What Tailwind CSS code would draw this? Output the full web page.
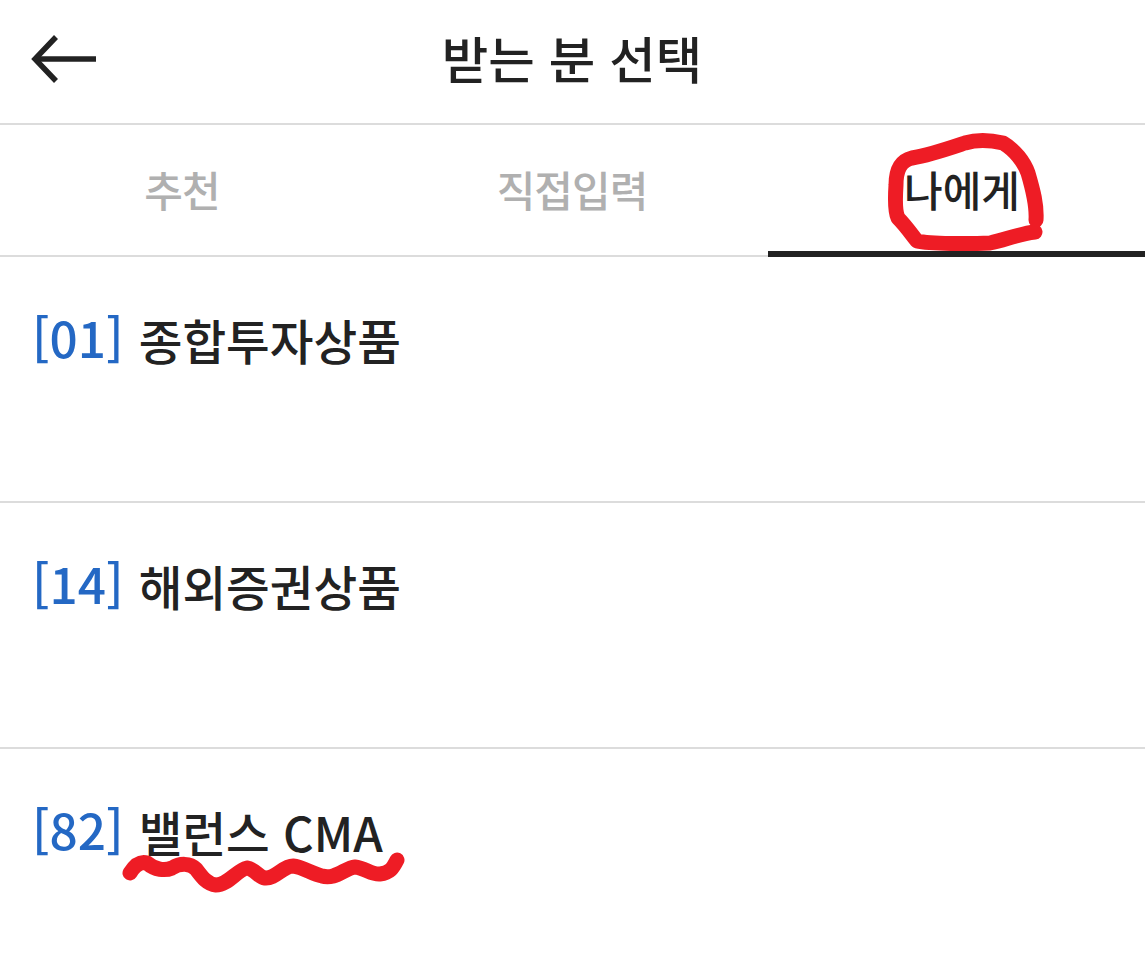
<!DOCTYPE html>
<html lang="ko">
<head>
<meta charset="utf-8">
<script src="https://cdn.jsdelivr.net/npm/@tailwindcss/browser@4"></script>
</head>
<body class="bg-white font-['Noto_Sans_CJK_KR',sans-serif] text-[#222222]">
<div class="relative w-[1145px] h-[954px] overflow-hidden">
  <header class="relative h-[125px] flex items-center justify-center border-b-2 border-[#dcdcdc]">
    <svg class="absolute left-[31px] top-[34px]" width="68" height="50" viewBox="0 0 68 50" fill="none" stroke="#222222" stroke-width="5.5"><path d="M65 25H5"/><path d="M25 3 4 25l21 22"/></svg>
    <h1 class="text-[50.5px] font-medium leading-none pb-[9px] pr-[1px]">받는 분 선택</h1>
  </header>
  <nav class="grid grid-cols-[364px_404px_377px] h-[132px] border-b-2 border-[#dcdcdc] text-[42px] font-medium">
    <div class="flex items-center justify-center text-[#b0b0b0] pb-[3px] tracking-[-1px]">추천</div>
    <div class="flex items-center justify-center text-[#b0b0b0] pb-[3px] pl-[12px] tracking-[-1px]">직접입력</div>
    <div class="flex items-center justify-center relative pb-[3px] pl-[11px]">나에게<span class="absolute left-0 right-0 bottom-[-2px] h-[6px] bg-[#222222]"></span></div>
  </nav>
  <main>
    <div class="h-[246px] border-b-2 border-[#dcdcdc] flex items-baseline gap-[15px] pl-[32px] pt-[50px] text-[47.5px] leading-[64px]">
      <span class="text-[49.5px] font-medium text-[#2468c4] -translate-y-[2px]">[01]</span>
      <span class="font-medium">종합투자상품</span>
    </div>
    <div class="h-[246px] border-b-2 border-[#dcdcdc] flex items-baseline gap-[15px] pl-[32px] pt-[50px] text-[47.5px] leading-[64px]">
      <span class="text-[49.5px] font-medium text-[#2468c4] -translate-y-[2px]">[14]</span>
      <span class="font-medium">해외증권상품</span>
    </div>
    <div class="h-[206px] flex items-baseline gap-[15px] pl-[32px] pt-[50px] text-[47.5px] leading-[64px]">
      <span class="text-[49.5px] font-medium text-[#2468c4] -translate-y-[2px]">[82]</span>
      <span class="font-medium">밸런스 CMA</span>
    </div>
  </main>
  <svg class="absolute inset-0 pointer-events-none" width="1145" height="954" viewBox="0 0 1145 954" fill="none" stroke="#ee1c25" stroke-linecap="round" stroke-linejoin="round">
    <path stroke-width="15" d="M1036 220C1037 205 1033 190 1028 173C1024 162 1015 150 1003 143C990 140 975 140 965 143C950 148 930 155 912 158C900 161 896 170 896 185C895 200 895 212 898 218C906 226 912 235 917 241C930 244 970 244 990 243C1005 240 1018 234 1035 232"/>
    <path stroke-width="15" d="M130 873C135 865 140 861 147 863C155 870 165 871 172 868C180 863 190 863 196 869C202 877 207 884 216 885C228 885 237 870 247 868C255 869 258 877 265 878C275 879 283 866 293 866C303 867 312 874 322 876C335 880 345 868 355 867C365 868 372 875 380 874C390 873 393 868 397 860"/>
  </svg>
</div>
</body>
</html>
